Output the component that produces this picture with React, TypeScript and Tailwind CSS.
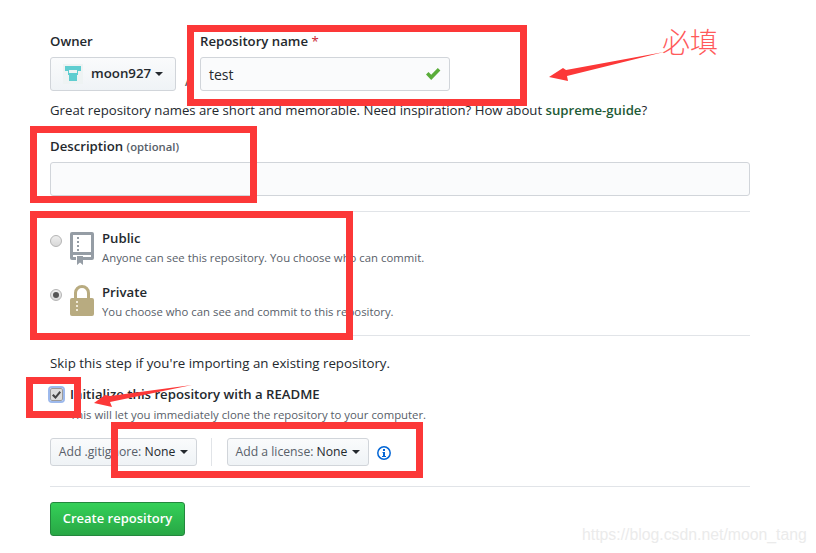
function Avatar() {
  return (
    <svg width="20" height="20" viewBox="0 0 20 20" className="shrink-0">
      <rect width="20" height="20" fill="#eef3f3" />
      <path d="M2 2h16v5h-3v4h-1v6H6v-6H5V7H2z" fill="#5fcdd0" />
      <path d="M6 6h8v3h-2v2H8V9H6z" fill="#eef3f3" />
      <path d="M8 9h4v3H8z" fill="#5fcdd0" />
    </svg>
  );
}

function Caret() {
  return <span className="inline-block w-0 h-0 border-x-[4px] border-x-transparent border-t-[4px] border-t-[#24292e]" />;
}

function BookIcon() {
  return (
    <svg width="24" height="33" viewBox="0 0 24 33" className="shrink-0 mt-[1px]">
      <path
        fill="#959da5"
        fillRule="evenodd"
        d="M2 0h20a2 2 0 0 1 2 2v24a2 2 0 0 1-2 2h-9v-3h8v-2H3v2h3v3H2a2 2 0 0 1-2-2V2a2 2 0 0 1 2-2zm1 3v17h18V3z"
      />
      <path fill="#959da5" d="M7 24h6v9l-3-2.500L7 33zM7 5h2v2H7zM7 9h2v2H7zM7 13h2v2H7zM7 17h2v2H7z" />
    </svg>
  );
}

function LockIcon() {
  return (
    <svg width="24" height="31" viewBox="0 0 24 31" className="shrink-0">
      <path
        fill="#b8ab80"
        fillRule="evenodd"
        d="M4 13V8a8 8 0 0 1 16 0v5h2a2 2 0 0 1 2 2v14a2 2 0 0 1-2 2H2a2 2 0 0 1-2-2V15a2 2 0 0 1 2-2zm3 0h10V8a5 5 0 0 0-10 0z"
      />
      <path fill="#efe9d6" d="M6 16h2v2H6zM6 20h2v2H6zM6 24h2v2H6z" />
    </svg>
  );
}

function Radio({ checked }: { checked?: boolean }) {
  return (
    <span className="mt-[4px] w-[12px] h-[12px] rounded-full border border-[#b4b4b4] bg-[linear-gradient(#eeeeee,#d8d8d8)] flex items-center justify-center shrink-0">
      {checked && <span className="w-[6px] h-[6px] rounded-full bg-[#555]" />}
    </span>
  );
}

function RedBox({ className }: { className: string }) {
  return <div className={`absolute border-[7px] border-[#fc3838] ${className}`} />;
}

function GrayButton({ label, className }: { label: string; className: string }) {
  return (
    <div className={`h-[28px] flex items-center justify-center gap-[5px] rounded-[3px] border border-[#d1d5da] bg-[linear-gradient(#fafbfc,#eff3f6)] text-[12.200px] text-[#586069] ${className}`}>
      <span>
        {label} <span className="text-[#24292e] font-medium">None</span>
      </span>
      <Caret />
    </div>
  );
}

export default function App() {
  return (
    <div className="relative w-[816px] h-[553px] overflow-hidden bg-white font-['Open_Sans','Noto_Sans_CJK_SC',sans-serif] text-[#24292e]">
      <div className="w-[700px] ml-[50px] pt-[32px]">
        <div className="flex items-start">
          <div>
            <div className="h-[18px] text-[13.200px] leading-[18px] font-semibold">Owner</div>
            <div className="mt-[7px] w-[126px] h-[34px] flex items-center gap-[8px] pl-[12px] rounded-[3px] border border-[#d1d5da] bg-[linear-gradient(#fafbfc,#eff3f6)] text-[13.300px] font-semibold">
              <Avatar />
              <span className="flex items-center gap-[4px]">
                moon927
                <Caret />
              </span>
            </div>
          </div>
          <div className="w-[24px] pt-[34px] text-center text-[18px] text-[#586069]">/</div>
          <div>
            <div className="h-[18px] text-[13.200px] leading-[18px] font-semibold">
              Repository name <span className="text-[#cb2431] font-normal">*</span>
            </div>
            <div className="mt-[7px] w-[250px] h-[34px] flex items-center justify-between px-[8px] rounded-[3px] border border-[#d1d5da] bg-[#fafbfc] text-[14px]">
              <span>test</span>
              <svg width="16" height="14" viewBox="0 0 16 14">
                <path d="M1 7.500l2.500-2.500 2.700 2.800L12.800 1 15.400 3.600 6.200 13z" fill="#5aad3a" />
              </svg>
            </div>
          </div>
        </div>

        <p className="mt-[8px] text-[13.200px] leading-[18px] text-[#24292e]">
          Great repository names are short and memorable. Need inspiration? How about{" "}
          <span className="font-semibold text-[#1e5a36]">supreme-guide</span>?
        </p>

        <div className="mt-[18px] h-[18px] text-[13.200px] leading-[18px] font-semibold">
          Description <span className="text-[11.300px] text-[#586069]">(optional)</span>
        </div>
        <div className="mt-[7px] h-[34px] rounded-[3px] border border-[#d1d5da] bg-[#fafbfc]" />

        <div className="mt-[15px] border-t border-[#e1e4e8]" />

        <div className="mt-[19px] flex gap-[8px] h-[32px]">
          <Radio />
          <BookIcon />
          <div className="-mt-[2px]">
            <div className="text-[13.200px] leading-[18px] font-semibold">Public</div>
            <div className="mt-[2px] text-[11.350px] leading-[18px] text-[#586069]">
              Anyone can see this repository. You choose who can commit.
            </div>
          </div>
        </div>
        <div className="mt-[22px] flex gap-[8px] h-[32px]">
          <Radio checked />
          <LockIcon />
          <div className="-mt-[2px]">
            <div className="text-[13.200px] leading-[18px] font-semibold">Private</div>
            <div className="mt-[2px] text-[11.350px] leading-[18px] text-[#586069]">
              You choose who can see and commit to this repository.
            </div>
          </div>
        </div>

        <div className="mt-[18px] border-t border-[#e1e4e8]" />

        <p className="mt-[18px] text-[13.300px] leading-[18px]">Skip this step if you're importing an existing repository.</p>

        <div className="mt-[13px] flex gap-[7px]">
          <span className="mt-[3px] w-[13px] h-[13px] rounded-[2px] bg-[#dcdcdc] border border-[#9a9a9a] outline-2 outline-[#9db9ec] flex items-center justify-center shrink-0">
            <svg width="11" height="10" viewBox="0 0 11 10">
              <path d="M1 5.500l1.500-1.500 2 2L8.500 1 10 2.500 4.500 9z" fill="#444" />
            </svg>
          </span>
          <div>
            <div className="text-[13.200px] leading-[18px] font-semibold">Initialize this repository with a README</div>
            <div className="mt-[3px] text-[11.350px] leading-[18px] text-[#586069]">
              This will let you immediately clone the repository to your computer.
            </div>
          </div>
        </div>

        <div className="mt-[14px] flex items-center">
          <GrayButton label="Add .gitignore:" className="w-[147px]" />
          <div className="mx-[14px] w-px h-[28px] bg-[#e1e4e8]" />
          <GrayButton label="Add a license:" className="w-[142px] ml-px" />
          <svg width="14" height="14" viewBox="0 0 14 14" className="ml-[8px] mt-[2px]">
            <circle cx="7" cy="7" r="6.200" fill="none" stroke="#0366d6" strokeWidth="1.500" />
            <path d="M6 3h2v2H6zM5.500 6H8v4h1v1H5v-1h1V7h-.5z" fill="#0366d6" />
          </svg>
        </div>

        <div className="mt-[20px] border-t border-[#e1e4e8]" />

        <div className="mt-[15px] w-[135px] h-[34px] flex items-center justify-center rounded-[3px] border border-[#23873d] bg-[linear-gradient(#34d058,#28a745)] text-[13px] font-semibold text-white">
          Create repository
        </div>
      </div>

      <RedBox className="left-[187px] top-[25px] w-[340px] h-[81px]" />
      <RedBox className="left-[30px] top-[126px] w-[227px] h-[77px]" />
      <RedBox className="left-[30px] top-[211px] w-[323px] h-[129px]" />
      <RedBox className="left-[26px] top-[377px] w-[55px] h-[41px]" />
      <RedBox className="left-[111px] top-[422px] w-[312px] h-[56px]" />

      <svg width="816" height="553" viewBox="0 0 816 553" className="absolute left-0 top-0 pointer-events-none">
        <polygon points="664,52 566,70 563,68 549,77 568,81 567,76" fill="#fc3838" />
        <polygon points="192,385 110,396 105,395 94,403 112,407 110,402" fill="#fc3838" />
      </svg>

      <div className="absolute left-[662px] top-[22px] text-[28px] leading-[38px] text-[#ff5a5a] font-['Noto_Sans_CJK_SC',sans-serif] font-light">必填</div>
      <div className="absolute left-[582px] top-[526px] text-[15.800px] leading-[18px] text-[#ebebeb] font-['Liberation_Sans',sans-serif]">https://blog.csdn.net/moon_tang</div>
    </div>
  );
}
